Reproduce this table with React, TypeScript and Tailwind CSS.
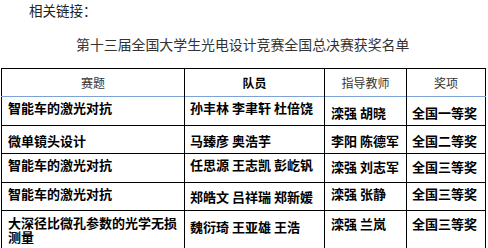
const font = { fontFamily: '"Noto Sans CJK SC", "Noto Sans", sans-serif' };

type Row = {
    topic: string;
    members: string;
    teacher: string;
    award: string;
    h: string;
    pads: [string, string, string, string];
};

const rows: Row[] = [
    { topic: '智能车的激光对抗', members: '孙丰林 李聿轩 杜倍饶', teacher: '滦强 胡晓', award: '全国一等奖', h: 'h-[29px]', pads: ['pt-[3px]', 'pt-[3px]', 'pt-[8px]', 'pt-[8px]'] },
    { topic: '微单镜头设计', members: '马臻彦 奥浩芋', teacher: '李阳 陈德军', award: '全国二等奖', h: 'h-[28px]', pads: ['pt-[7px]', 'pt-[7px]', 'pt-[7px]', 'pt-[7px]'] },
    { topic: '智能车的激光对抗', members: '任思源 王志凯 彭屹钒', teacher: '滦强 刘志军', award: '全国三等奖', h: 'h-[29px]', pads: ['pt-[3px]', 'pt-[3px]', 'pt-[5px]', 'pt-[5px]'] },
    { topic: '智能车的激光对抗', members: '郑皓文 吕祥瑞 郑新媛', teacher: '滦强 张静', award: '全国三等奖', h: 'h-[28px]', pads: ['pt-[3px]', 'pt-[6px]', 'pt-[3px]', 'pt-[3px]'] },
    { topic: '大深径比微孔参数的光学无损测量', members: '魏衍琦 王亚雄 王浩', teacher: '滦强 兰岚', award: '全国三等奖', h: 'h-[52px]', pads: ['pt-[5px]', 'pt-[8px]', 'pt-[5px]', 'pt-[5px]'] },
];

const App: React.FC = () => {
    return (
        <div className="w-[488px] h-[248px] overflow-hidden bg-white text-black" style={font}>
            <p className="pl-[29px] text-[13.5px] leading-[20px] text-[#222]">相关链接：</p>

            <h2 className="mt-[14px] pl-[76px] text-[13.9px] leading-[20px] text-[#333] whitespace-nowrap">
                第十三届全国大学生光电设计竞赛全国总决赛获奖名单
            </h2>

            {/* Award table */}
            <table className="mt-[14px] ml-px w-[484px] table-fixed border-collapse border border-black">
                <thead>
                    <tr className="h-[28px] border-b border-[#7da3d6]">
                        <th className="w-[183px] border-r border-black font-normal text-[12px] text-[#333] align-middle">赛题</th>
                        <th className="w-[140px] border-r border-black font-bold text-[12px] text-black align-middle">队员</th>
                        <th className="w-[82px] border-r border-black font-normal text-[12px] text-[#333] align-middle">指导教师</th>
                        <th className="w-[79px] font-normal text-[12px] text-[#333] align-middle">奖项</th>
                    </tr>
                </thead>
                <tbody>
                    {rows.map((r, i) => (
                        <tr key={i} className={`${r.h} border-b border-black`}>
                            <td className={`${r.pads[0]} border-r border-black align-top px-[6px] text-[13px] font-bold ${i === 4 ? 'leading-[14px]' : 'leading-[15px]'}`}>{r.topic}</td>
                            <td className={`${r.pads[1]} border-r border-black align-top px-[5px] text-[13px] font-bold leading-[15px] whitespace-pre`}>{r.members}</td>
                            <td className={`${r.pads[2]} border-r border-black align-top px-[6px] text-[13px] font-bold leading-[15px] whitespace-pre`}>{r.teacher}</td>
                            <td className={`${r.pads[3]} align-top px-[5px] text-[13px] font-bold leading-[15px] whitespace-pre`}>{r.award}</td>
                        </tr>
                    ))}
                </tbody>
            </table>
        </div>
    );
};

export default App;
